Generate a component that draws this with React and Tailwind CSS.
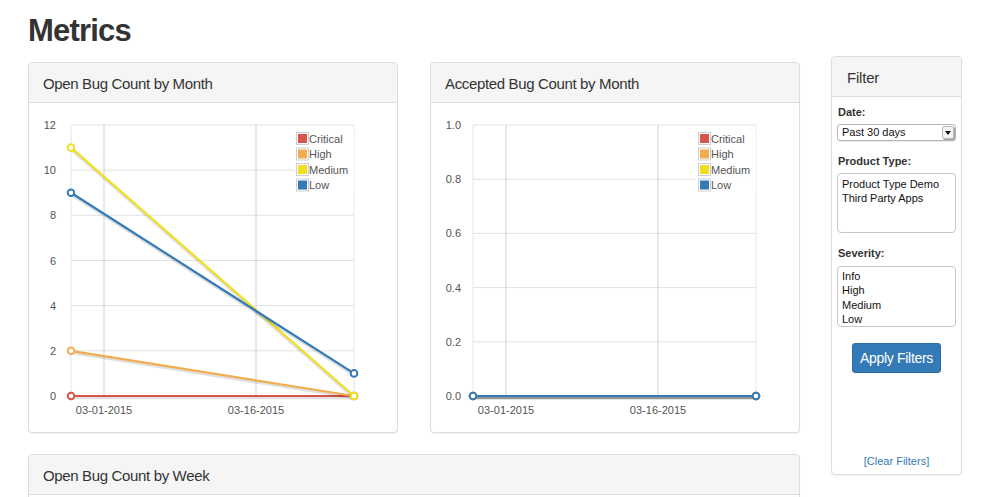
import React from "react";

const FONT = { fontFamily: '"Liberation Sans", Arial, sans-serif' };

const SERIES_NAMES = [
  { name: "Critical", color: "#d9534f" },
  { name: "High", color: "#f0ad4e" },
  { name: "Medium", color: "#f0de22" },
  { name: "Low", color: "#337ab7" },
];

function Chart({ yLabels, max, labelRight, data }) {
  const left = 42, right = 325, top = 22, bottom = 293;
  const n = yLabels.length;
  const yOf = (v) => bottom - (v / max) * (bottom - top);

  return (
    <svg width="368" height="329" className="block">
      {/* horizontal grid */}
      {yLabels.map((label, i) => {
        const y = bottom - (i * (bottom - top)) / (n - 1);
        return (
          <g key={label}>
            <line x1={left} x2={right} y1={y} y2={y} stroke="#e2e2e2" strokeWidth="1" />
            <text x={labelRight} y={y + 4} textAnchor="end" fontSize="11" fill="#545454" style={FONT}>
              {label}
            </text>
          </g>
        );
      })}
      {/* vertical grid */}
      <line x1={left} x2={left} y1={top} y2={bottom} stroke="#e6e6e6" />
      <line x1={right} x2={right} y1={top} y2={bottom} stroke="#e6e6e6" />
      <line x1="75" x2="75" y1={top} y2={bottom} stroke="#d2d2d2" />
      <line x1="227" x2="227" y1={top} y2={bottom} stroke="#d2d2d2" />
      <text x="75" y="311" textAnchor="middle" fontSize="11" fill="#545454" style={FONT}>
        03-01-2015
      </text>
      <text x="227" y="311" textAnchor="middle" fontSize="11" fill="#545454" style={FONT}>
        03-16-2015
      </text>

      {/* series */}
      {data.map((s, i) => {
        const y1 = yOf(s.from), y2 = yOf(s.to);
        const color = SERIES_NAMES[i].color;
        return (
          <g key={i}>
            <line x1={left} y1={y1 + 2} x2={right} y2={y2 + 2} stroke="rgba(0,0,0,0.12)" strokeWidth="2.5" />
            <line x1={left} y1={y1} x2={right} y2={y2} stroke={color} strokeWidth="2.2" />
            <circle cx={left} cy={y1} r="3.3" fill="#fff" stroke={color} strokeWidth="2" />
            <circle cx={right} cy={y2} r="3.3" fill="#fff" stroke={color} strokeWidth="2" />
          </g>
        );
      })}

      {/* legend */}
      <rect x="265" y="27" width="60" height="62" fill="#fff" opacity="0.85" />
      {SERIES_NAMES.map((s, i) => {
        const y = 29 + i * 15.5;
        return (
          <g key={s.name}>
            <rect x="267.5" y={y + 0.5} width="12" height="12" fill="#fff" stroke="#cfcfcf" />
            <rect x="269" y={y + 2} width="9" height="9" fill={s.color} />
            <text x="280" y={y + 10.5} fontSize="11" fill="#545454" style={FONT}>
              {s.name}
            </text>
          </g>
        );
      })}
    </svg>
  );
}

function Panel({ title, children, className = "" }) {
  return (
    <div className={`rounded-[4px] border border-[#dddddd] bg-white shadow-[0_1px_1px_rgba(0,0,0,0.05)] ${className}`}>
      <div className="h-[40px] flex items-center px-[14px] pt-[3px] bg-[#f5f5f5] border-b border-[#dddddd] rounded-t-[4px] text-[15px] tracking-[-0.35px] text-[#333]">
        {title}
      </div>
      {children}
    </div>
  );
}

function ListBox({ items, h }) {
  return (
    <div className={`mx-[5px] border border-[#c6c6c6] rounded-[4px] px-[4px] text-[11px] leading-[14.3px] text-[#111] ${h}`}>
      {items.map((it) => (
        <div key={it}>{it}</div>
      ))}
    </div>
  );
}

function FilterPanel() {
  return (
    <div className="w-[131px] h-[419px] rounded-[4px] border border-[#dddddd] bg-white shadow-[0_1px_1px_rgba(0,0,0,0.05)] flex flex-col">
      <div className="h-[40px] flex items-center px-[15px] pt-[4px] bg-[#f5f5f5] border-b border-[#dddddd] rounded-t-[4px] text-[15px] tracking-[-0.2px] text-[#333]">
        Filter
      </div>
      <div className="flex-1 flex flex-col text-[#333]">
        <div className="px-[6px] pt-[9px] text-[11px] font-bold leading-[13px]">Date:</div>
        <div className="mx-[5px] mt-[5px] h-[17px] border border-[#b5b5b5] rounded-[3px] flex items-center justify-between pl-[4px] pr-[1px] text-[11px] text-[#111] shadow-[0_1px_0_rgba(0,0,0,0.08)]">
          <span>Past 30 days</span>
          <span className="w-[12px] h-[13px] border border-[#b8b8b8] rounded-[2px] bg-[#f4f4f4] shadow-[1px_1px_0_rgba(0,0,0,0.35)] flex items-center justify-center">
            <span className="block w-0 h-0 border-l-[3px] border-r-[3px] border-t-[4px] border-l-transparent border-r-transparent border-t-[#111]" />
          </span>
        </div>
        <div className="px-[6px] pt-[14px] pb-[5px] text-[11px] font-bold leading-[13px]">Product Type:</div>
        <ListBox items={["Product Type Demo", "Third Party Apps"]} h="h-[60px] pt-[3px]" />
        <div className="px-[6px] pt-[14px] pb-[6px] text-[11px] font-bold leading-[13px]">Severity:</div>
        <ListBox items={["Info", "High", "Medium", "Low"]} h="h-[61px] pt-[2px]" />
        <div className="flex justify-center mt-[16px]">
          <button className="w-[89px] h-[30px] bg-[#337ab7] border border-[#2e6da4] rounded-[3px] text-white text-[14px] tracking-[-0.3px]">
            Apply Filters
          </button>
        </div>
        <div className="mt-auto pb-[5px] text-center text-[11px] text-[#337ab7]">[Clear Filters]</div>
      </div>
    </div>
  );
}

export default function App() {
  return (
    <div className="w-[984px] h-[497px] overflow-hidden bg-white pl-[28px] flex" style={FONT}>
      {/* Left column */}
      <div className="w-[772px]">
        <h1 className="mt-[14px] text-[31px] leading-[34px] font-bold tracking-[-0.8px] text-[#333]">Metrics</h1>

        <div className="mt-[14px] flex gap-[32px]">
          <Panel title="Open Bug Count by Month" className="w-[370px] h-[371px]">
            <Chart
              yLabels={["0", "2", "4", "6", "8", "10", "12"]}
              max={12}
              labelRight={27}
              data={[
                { from: 0, to: 0 },
                { from: 2, to: 0 },
                { from: 11, to: 0 },
                { from: 9, to: 1 },
              ]}
            />
          </Panel>
          <Panel title="Accepted Bug Count by Month" className="w-[370px] h-[371px]">
            <Chart
              yLabels={["0.0", "0.2", "0.4", "0.6", "0.8", "1.0"]}
              max={1}
              labelRight={30}
              data={[
                { from: 0, to: 0 },
                { from: 0, to: 0 },
                { from: 0, to: 0 },
                { from: 0, to: 0 },
              ]}
            />
          </Panel>
        </div>

        <Panel title="Open Bug Count by Week" className="mt-[21px] w-[772px] h-[100px]" />
      </div>

      {/* Right column - Filter */}
      <div className="ml-[31px] mt-[56px]">
        <FilterPanel />
      </div>
    </div>
  );
}
